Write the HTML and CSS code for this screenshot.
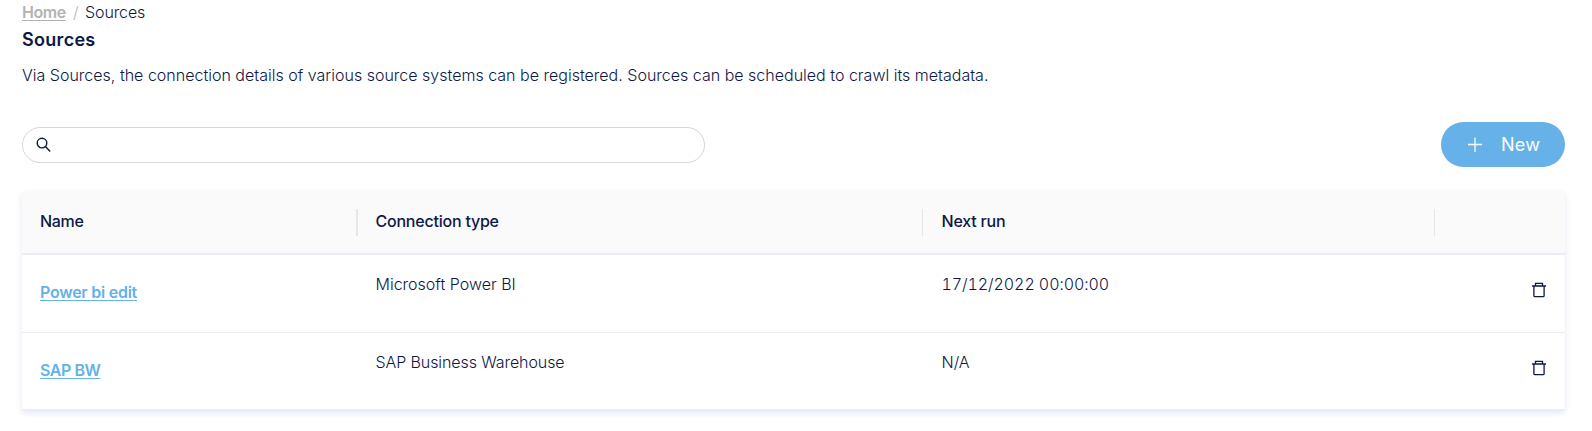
FILE: index.html
```html
<!DOCTYPE html>
<html lang="en">
<head>
<meta charset="utf-8">
<title>Sources</title>
<link rel="stylesheet" href="styles.css">
</head>
<body>
<main class="page">
  <nav class="breadcrumb"><a class="home" href="#">Home</a><span class="slash">/</span><span class="current">Sources</span></nav>
  <h1 class="title"><span>Sources</span></h1>
  <p class="intro"><span>Via Sources, the connection details of various source systems can be registered. Sources can be scheduled to crawl its metadata.</span></p>
  <div class="toolbar">
    <label class="search">
      <svg class="search-icon" width="16" height="16" viewBox="0 0 16 16"><circle cx="6" cy="6.1" r="4.8"/><path d="M9.4 9.4 14.2 14.4"/></svg>
      <input class="search-input" type="text" aria-label="Search">
    </label>
    <button class="new-button"><svg class="plus" width="16" height="16" viewBox="0 0 16 16"><path d="M1 7.5H15M8 .5V15"/></svg><span class="new-label">New</span></button>
  </div>
  <section class="table">
    <div class="row head">
      <div class="cell first"><span class="h-name">Name</span></div>
      <div class="cell"><span class="h-type">Connection type</span></div>
      <div class="cell"><span class="h-run">Next run</span></div>
      <div class="cell"></div>
    </div>
    <div class="row">
      <div class="cell link-cell"><a class="link l-power" href="#">Power bi edit</a></div>
      <div class="cell"><span class="t-power">Microsoft Power BI</span></div>
      <div class="cell"><span class="t-date">17/12/2022 00:00:00</span></div>
      <div class="cell action"><svg class="trash" width="14" height="16" viewBox="0 0 14 16"><path d="M0 4H14M3.5 4V1.4H10.5V4M1.9 4V13.7Q1.9 14.7 2.9 14.7H11.1Q12.1 14.7 12.1 13.7V4"/></svg></div>
    </div>
    <div class="row">
      <div class="cell link-cell"><a class="link l-sap" href="#">SAP BW</a></div>
      <div class="cell"><span class="t-sap">SAP Business Warehouse</span></div>
      <div class="cell"><span class="t-na">N/A</span></div>
      <div class="cell action"><svg class="trash" width="14" height="16" viewBox="0 0 14 16"><path d="M0 4H14M3.5 4V1.4H10.5V4M1.9 4V13.7Q1.9 14.7 2.9 14.7H11.1Q12.1 14.7 12.1 13.7V4"/></svg></div>
    </div>
  </section>
</main>
</body>
</html>
```
FILE: styles.css
```css
* { box-sizing: border-box; }
body { margin: 0; background: #fff; color: #0d1846; font: 300 16px/24px Inter, "Liberation Sans", sans-serif; overflow: hidden; }
.page { padding: 0 27px 20px 22px; }
.breadcrumb { display: flex; height: 25px; white-space: nowrap; }
.home { width: 44px; color: #b3b3b3; font-weight: 600; letter-spacing: -.45px; text-underline-offset: 2px; }
.slash { margin-left: 7px; width: 12px; color: #b3b3b3; }
.current { letter-spacing: -.1px; }
.title { margin: 0; height: 34px; font-size: 18px; line-height: 30px; font-weight: 600; letter-spacing: .3px; }
.intro { margin: 0; height: 63px; padding-top: 4px; white-space: nowrap; letter-spacing: .008px; }
.toolbar { display: flex; justify-content: space-between; align-items: flex-start; height: 69px; }
.search { display: flex; align-items: center; width: 683px; height: 36px; margin-top: 5px; padding: 0 13px; border: 1px solid #d6d6d6; border-radius: 18px; }
.search-icon { fill: none; stroke: #0d1846; stroke-width: 1.4; }
.search-input { flex: 1; border: 0; outline: 0; background: transparent; font: inherit; }
.new-button { display: flex; align-items: center; width: 124px; height: 45px; padding: 0 0 0 26px; border: 0; border-radius: 22.5px; background: #65b1e8; color: #fff; font: 400 18px/24px Inter, sans-serif; }
.plus { fill: none; stroke: #fff; stroke-width: 1.3; }
.new-label { margin-left: 18px; letter-spacing: .2px; }
.table { height: 219px; box-shadow: 0 3px 5px rgba(70, 100, 230, .12), 0 2px 8px rgba(70, 100, 230, .04); border-radius: 3px; }
.row { display: grid; grid-template-columns: 336px 565px 512px 130px; height: 78px; border-bottom: 1px solid #ededf1; }
.row:last-child { height: 77px; }
.head { height: 64px; padding-top: 18px; background: #fafafa; border-bottom: 2px solid #ececf4; border-radius: 3px 3px 0 0; font-weight: 500; }
.cell { padding: 17px 0 0 17.5px; white-space: nowrap; }
.cell:nth-child(3) { padding-left: 18.5px; }
.head .cell { height: 27px; padding-top: 0; border-right: 1px solid #e6e6e8; }
.head .first { border-right-width: 2px; }
.head .cell:last-child { border: 0; }
.cell:first-child { padding-left: 18px; }
.h-name { letter-spacing: -.3px; }
.h-type { letter-spacing: -.22px; }
.h-run { letter-spacing: -.2px; }
.t-date { font-variant-numeric: tabular-nums; letter-spacing: -.08px; }
.t-sap { letter-spacing: -.09px; }
.link-cell { padding-top: 25px; }
.link { color: #65b1e8; font-weight: 600; text-underline-offset: 2px; }
.l-power { letter-spacing: -.25px; }
.l-sap { letter-spacing: -.45px; }
.cell.action { display: flex; justify-content: flex-end; align-items: flex-start; padding: 27px 19px 0 0; }
.trash { fill: none; stroke: #0d1846; stroke-width: 1.3; }
```
